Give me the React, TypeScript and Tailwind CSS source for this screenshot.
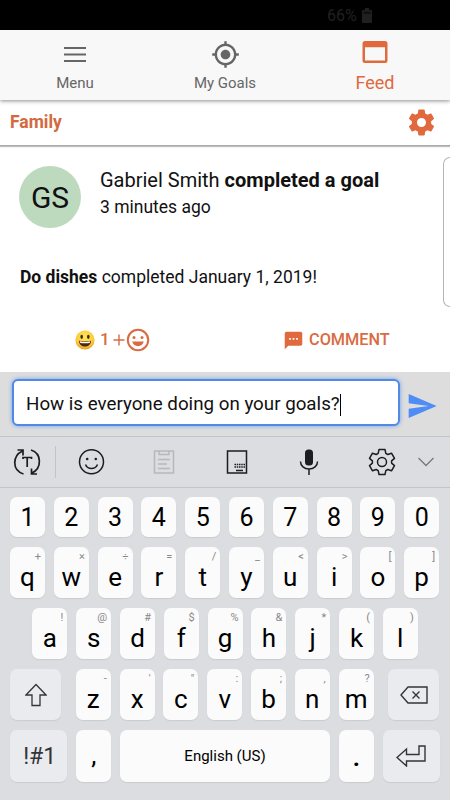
import type { ReactNode } from "react";
import clsx from "clsx";

const numberRow = ["1", "2", "3", "4", "5", "6", "7", "8", "9", "0"];

const topRow = [
  ["q", "+"],
  ["w", "×"],
  ["e", "÷"],
  ["r", "="],
  ["t", "/"],
  ["y", "_"],
  ["u", "<"],
  ["i", ">"],
  ["o", "["],
  ["p", "]"],
];

const homeRow = [
  ["a", "!"],
  ["s", "@"],
  ["d", "#"],
  ["f", "$"],
  ["g", "%"],
  ["h", "&"],
  ["j", "*"],
  ["k", "("],
  ["l", ")"],
];

const bottomRow = [
  ["z", "-"],
  ["x", "'"],
  ["c", '"'],
  ["v", ":"],
  ["b", ";"],
  ["n", ","],
  ["m", "?"],
];

function Icon({ d, size, className }: { d: string; size: number; className?: string }) {
  return (
    <svg
      width={size}
      height={size}
      viewBox="0 0 24 24"
      fill="currentColor"
      className={clsx("shrink-0", className)}
    >
      <path d={d} />
    </svg>
  );
}

const icons = {
  target:
    "M12 8c-2.21 0-4 1.79-4 4s1.79 4 4 4 4-1.79 4-4-1.79-4-4-4zm8.94 3c-.46-4.17-3.77-7.48-7.94-7.94V1h-2v2.06C6.83 3.52 3.52 6.83 3.06 11H1v2h2.06c.46 4.17 3.77 7.48 7.94 7.94V23h2v-2.06c4.17-.46 7.48-3.77 7.94-7.94H23v-2h-2.06zM12 19c-3.87 0-7-3.13-7-7s3.13-7 7-7 7 3.13 7 7-3.13 7-7 7z",
  settings:
    "M19.43 12.98c.04-.32.07-.64.07-.98s-.03-.66-.07-.98l2.11-1.65c.19-.15.24-.42.12-.64l-2-3.46c-.12-.22-.39-.3-.61-.22l-2.49 1c-.52-.4-1.08-.73-1.69-.98l-.38-2.65C14.46 2.18 14.25 2 14 2h-4c-.25 0-.46.18-.49.42l-.38 2.65c-.61.25-1.17.59-1.69.98l-2.49-1c-.23-.09-.49 0-.61.22l-2 3.46c-.13.22-.07.49.12.64l2.11 1.65c-.04.32-.07.65-.07.98s.03.66.07.98l-2.11 1.65c-.19.15-.24.42-.12.64l2 3.46c.12.22.39.3.61.22l2.49-1c.52.4 1.08.73 1.69.98l.38 2.65c.03.24.24.42.49.42h4c.25 0 .46-.18.49-.42l.38-2.65c.61-.25 1.17-.59 1.69-.98l2.49 1c.23.09.49 0 .61-.22l2-3.46c.12-.22.07-.49-.12-.64l-2.11-1.65zM12 15.5c-1.93 0-3.5-1.57-3.5-3.5s1.57-3.5 3.5-3.5 3.5 1.57 3.5 3.5-1.57 3.5-3.5 3.5z",
  comment:
    "M20 2H4c-1.1 0-1.99.9-1.99 2L2 22l4-4h14c1.1 0 2-.9 2-2V4c0-1.1-.9-2-2-2zM9 11H7V9h2v2zm4 0h-2V9h2v2zm4 0h-2V9h2v2z",
  send: "M2.01 21L23 12 2.01 3 2 10l15 2-15 2z",
};

function StatusBar() {
  return (
    <div className="flex h-[30px] items-center bg-black pl-[327px] text-[#202020]">
      <span className="w-[35px] pt-0.5 text-base leading-none">66%</span>
      <svg width="10" height="15" viewBox="0 0 10 15" fill="currentColor">
        <path d="M3 0h4v2h2a1 1 0 0 1 1 1v11a1 1 0 0 1-1 1H1a1 1 0 0 1-1-1V3a1 1 0 0 1 1-1h2z" />
        <path d="M1.5 3.5h7V6h-7z" fill="#101010" />
      </svg>
    </div>
  );
}

function NavBar() {
  return (
    <nav className="relative z-20 grid h-[70px] grid-cols-3 bg-[#f8f8f8] text-[#666] shadow-[0_1px_4px_rgba(0,0,0,0.45)]">
      <div className="flex flex-col items-center pt-[10px]">
        <svg width="30" height="30" viewBox="0 0 30 30" stroke="currentColor" strokeWidth="2.2">
          <path d="M4 8h22M4 14.5h22M4 21h22" />
        </svg>
        <span className="mt-[4px] text-[15px] leading-[18px]">Menu</span>
      </div>
      <div className="flex flex-col items-center pt-[10px]">
        <Icon d={icons.target} size={29} />
        <span className="mt-[5px] text-[15px] leading-[18px]">My Goals</span>
      </div>
      <div className="flex flex-col items-center pt-[11px] text-[#e06a3e]">
        <svg width="26" height="23" viewBox="0 0 26 23" fill="currentColor" fillRule="evenodd">
          <path d="M3 0h20a2.500 2.500 0 0 1 2.500 2.500v17a2.500 2.500 0 0 1-2.500 2.500H3a2.500 2.500 0 0 1-2.500-2.500v-17A2.500 2.500 0 0 1 3 0zM3 6.200v13.300h20V6.200z" />
        </svg>
        <span className="mt-[9px] text-[18px] leading-[19px]">Feed</span>
      </div>
    </nav>
  );
}

function GroupHeader() {
  return (
    <div className="relative z-10 flex h-[46px] items-center justify-between border-b border-[#aaa] bg-white pr-[13px] pl-[10px] text-[#d4693e] shadow-[0_1px_1px_rgba(0,0,0,0.25)]">
      <span className="text-[17.5px] font-bold">Family</span>
      <Icon d={icons.settings} size={31} className="text-[#e06a3e]" />
    </div>
  );
}

function FeedCard() {
  return (
    <div className="flex h-[226px] justify-between bg-white pt-px">
      <div className="flex w-[430px] flex-col text-[#111]">
        <div className="flex pt-[19px] pl-[19px]">
          <div className="flex size-[62px] items-center justify-center rounded-full bg-[#bddabf] text-[30px]">
            GS
          </div>
          <div className="pl-[19px]">
            <p className="text-[20px] leading-7">
              Gabriel Smith <b>completed a goal</b>
            </p>
            <p className="pt-px text-[17.5px] leading-[25px]">3 minutes ago</p>
          </div>
        </div>
        <p className="mt-[37px] pl-5 text-[17.5px] leading-6">
          <b>Do dishes</b> completed January 1, 2019!
        </p>
        <div className="mt-[39px] flex h-6 items-center text-[#d96b43]">
          <div className="flex w-[283px] items-center pl-[75px]">
            <GrinEmoji />
            <span className="ml-[5px] text-[17px] font-medium">1</span>
            <svg width="12" height="12" viewBox="0 0 12 12" stroke="currentColor" strokeWidth="1.4" className="ml-[3px]">
              <path d="M6 0.5v11M0.5 6h11" />
            </svg>
            <AddReaction />
          </div>
          <Icon d={icons.comment} size={21} className="text-[#e06a3e]" />
          <span className="ml-[5px] text-[16.3px] font-medium">COMMENT</span>
        </div>
      </div>
      <div className="mt-[10px] h-[150px] w-[7px] rounded-l-lg border border-r-0 border-[#b5b5b5]" />
    </div>
  );
}

function GrinEmoji() {
  return (
    <svg width="20" height="20" viewBox="0 0 20 20">
      <defs>
        <radialGradient id="face" cx="50%" cy="35%" r="65%">
          <stop offset="0" stopColor="#ffe75c" />
          <stop offset="0.7" stopColor="#fbcb38" />
          <stop offset="1" stopColor="#e89b25" />
        </radialGradient>
      </defs>
      <circle cx="10" cy="10" r="9.6" fill="url(#face)" />
      <ellipse cx="6.7" cy="6.8" rx="1.3" ry="2.1" fill="#3b2a14" />
      <ellipse cx="13.3" cy="6.8" rx="1.3" ry="2.1" fill="#3b2a14" />
      <path d="M4 10.7q6 1.3 12 0c0 3.6-2.7 5.8-6 5.8s-6-2.2-6-5.8z" fill="#51240f" />
      <path d="M4.8 11.2q5.2 1 10.4 0l-.5 1.7q-4.7.8-9.4 0z" fill="#fff" />
    </svg>
  );
}

function AddReaction() {
  return (
    <svg width="24" height="24" viewBox="0 0 24 24" fill="none" className="ml-px shrink-0">
      <circle cx="12" cy="12" r="10.2" stroke="currentColor" strokeWidth="2" />
      <path d="M6.2 13.6h11.6c-.8 3-3 4.6-5.8 4.6s-5-1.6-5.8-4.6z" fill="currentColor" />
      <circle cx="8" cy="9.4" r="1.5" fill="currentColor" />
      <circle cx="16" cy="9.4" r="1.5" fill="currentColor" />
    </svg>
  );
}

function CommentInput() {
  return (
    <div className="flex h-16 bg-[#dddddd] pt-[7px] pl-3">
      <div className="flex h-[47px] w-[388px] items-center rounded-md border-2 border-[#5288e6] bg-white pt-[4px] pl-[12px] text-[18.75px] text-[#111] shadow-[0_0_4px_#6f9ff0]">
        <span>How is everyone doing on your goals?</span>
        <span className="h-[22px] w-px bg-black" />
      </div>
      <Icon d={icons.send} size={32} className="mt-[11px] ml-[6px] text-[#4f8cf5]" />
    </div>
  );
}

function Toolbar() {
  return (
    <div className="flex h-[52px] items-center border-y border-[#c3c4c9] text-[#1c1d20]">
      <svg width="28" height="28" viewBox="0 0 28 28" fill="none" stroke="currentColor" strokeWidth="1.7" className="ml-[13px]">
        <path d="M10.5 26C-1 22.5-1 8 9.5 3M4.5 2h5.5v5.5" />
        <path d="M18 2C29 5.5 29 20 19 25M24 26h-5.500v-5.500" />
        <path d="M10 11V9.500h8.500V11M14.200 9.500v9.500" strokeWidth="1.700" />
      </svg>
      <div className="ml-[14px] h-8 w-px bg-[#c3c4c9]" />
      <svg width="28" height="28" viewBox="0 0 28 28" fill="none" stroke="currentColor" strokeWidth="1.5" className="ml-[22px]">
        <circle cx="13.5" cy="13.800" r="12" />
        <path d="M7.500 16.500c1 2.500 3.200 4 6 4s5-1.500 6-4" />
        <circle cx="9.200" cy="11" r="1.300" fill="currentColor" stroke="none" />
        <circle cx="17.800" cy="11" r="1.300" fill="currentColor" stroke="none" />
      </svg>
      <svg width="22" height="26" viewBox="0 0 22 26" fill="none" stroke="#b7b8bc" strokeWidth="1.5" className="ml-[47px]">
        <path d="M1.500 2h19v22h-19zM6 2v3.500h10V2M5 10.500h12M5 15h9M5 19.500h12" />
      </svg>
      <svg width="22" height="26" viewBox="0 0 22 26" fill="none" stroke="currentColor" strokeWidth="1.5" className="ml-[51px]">
        <path d="M1.500 2h19v22h-19z" />
        <path d="M8.500 15.500H19M8.500 18H19" strokeWidth="1.4" strokeDasharray="1.5 .75" />
        <path d="M10 21.500h7" />
      </svg>
      <svg width="22" height="28" viewBox="0 0 22 28" fill="none" stroke="currentColor" strokeWidth="1.5" className="ml-[50px]">
        <rect x="7" y="1.500" width="8" height="16" rx="3.500" fill="currentColor" stroke="none" />
        <path d="M2.500 13.500c0 4.500 3.600 7.500 8.500 7.500s8.500-3 8.500-7.500M11 21v6" />
      </svg>
      <svg width="28" height="28" viewBox="0 0 28 28" fill="none" stroke="currentColor" strokeWidth="1.5" strokeLinejoin="round" className="ml-[48px]">
        <path d="M11 1.500h6l.8 3.800 2 1.200 3.700-1.300 3 5.200-2.900 2.500v2.200l2.900 2.500-3 5.200-3.700-1.300-2 1.200-.8 3.800h-6l-.8-3.800-2-1.200-3.700 1.300-3-5.200 2.900-2.500v-2.200l-2.900-2.500 3-5.200 3.700 1.300 2-1.200z" />
        <circle cx="14" cy="14" r="4.500" />
      </svg>
      <svg width="18" height="12" viewBox="0 0 18 12" fill="none" stroke="#77787c" strokeWidth="1.3" className="ml-[21px]">
        <path d="M1.500 2 9 9.500 16.500 2" />
      </svg>
    </div>
  );
}

interface KeyProps {
  children?: ReactNode;
  hint?: string;
  className?: string;
  special?: boolean;
}

function Key({ children, hint, className, special }: KeyProps) {
  return (
    <div
      className={clsx(
        "relative flex justify-center rounded-[7px] shadow-[0_1px_1px_rgba(0,0,0,0.08)]",
        special ? "bg-[#eaebef] text-[#333539]" : "bg-[#fbfbfb] text-black",
        className
      )}
    >
      {hint && (
        <span className="absolute top-[4px] right-[4px] text-[11px] leading-3 text-[#88898c]">
          {hint}
        </span>
      )}
      {children}
    </div>
  );
}

function LetterKeys({ keys }: { keys: string[][] }) {
  return keys.map(([letter, hint]) => (
    <Key key={letter} hint={hint} className="h-[51px] w-[35px] pt-[14px] text-[26px] leading-8">
      {letter}
    </Key>
  ));
}

function Keyboard() {
  return (
    <div className="flex grow flex-col gap-[10px] px-[10px] pt-[9px]">
      <div className="flex gap-[8.8px]">
        {numberRow.map((n) => (
          <Key key={n} className="h-10 w-[35px] items-center pt-px text-[25px]">
            {n}
          </Key>
        ))}
      </div>
      <div className="flex gap-[8.8px]">
        <LetterKeys keys={topRow} />
      </div>
      <div className="flex gap-[8.8px] pl-[22.4px]">
        <LetterKeys keys={homeRow} />
      </div>
      <div className="flex gap-[8.8px]">
        <Key special className="mr-[6px] h-[51px] w-[51px] items-center">
          <svg width="22" height="24" viewBox="0 0 22 24" fill="none" stroke="currentColor" strokeWidth="1.3">
            <path d="M11 1.500 21 12h-6v10.500H7V12H1z" />
          </svg>
        </Key>
        <LetterKeys keys={bottomRow} />
        <Key special className="ml-[6px] h-[51px] w-[51px] items-center">
          <svg width="28" height="18" viewBox="0 0 28 18" fill="none" stroke="currentColor" strokeWidth="1.4">
            <path d="M8 1h19v16H8L1 9zM12.500 5.500l7 7M19.500 5.500l-7 7" />
          </svg>
        </Key>
      </div>
      <div className="flex gap-[8.8px]">
        <Key special className="h-[52px] w-[57.4px] items-center pt-[2px] pl-[2px] text-[23px]">
          !#1
        </Key>
        <Key className="h-[52px] w-[35px] pt-[9px] text-[26px] leading-8">,</Key>
        <Key className="h-[52px] w-[210px] items-center text-[15px] text-[#222]">English (US)</Key>
        <Key className="h-[52px] w-[35px] pt-[11px] text-[28px] leading-8 font-medium">.</Key>
        <Key special className="h-[52px] w-[57px] items-center">
          <svg width="30" height="22" viewBox="0 0 30 22" fill="none" stroke="currentColor" strokeWidth="1.4">
            <path d="M1 12.500 10.500 4v5.500H23V1h6v15H10.500v5z" />
          </svg>
        </Key>
      </div>
    </div>
  );
}

export default function App() {
  return (
    <div className="flex h-[800px] w-[450px] flex-col overflow-hidden bg-white font-[Roboto,sans-serif]">
      <StatusBar />
      <NavBar />
      <GroupHeader />
      <FeedCard />
      <CommentInput />
      <div className="flex grow flex-col bg-[#dcdde1]">
        <Toolbar />
        <Keyboard />
      </div>
    </div>
  );
}
